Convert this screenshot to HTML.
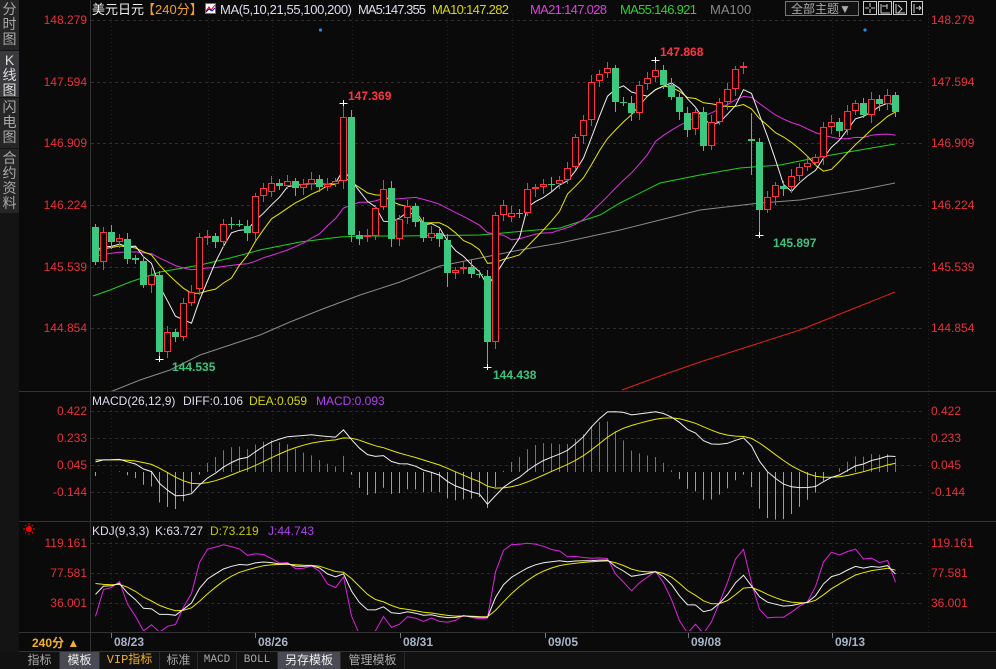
<!DOCTYPE html>
<html><head><meta charset="utf-8">
<style>
*{margin:0;padding:0;box-sizing:border-box}
body{width:996px;height:669px;background:#0a0a0a;overflow:hidden;position:relative;font-family:"Liberation Sans","Noto Sans CJK SC",sans-serif}
#side{position:absolute;left:0;top:0;width:19px;height:652px;background:#141414}
.st{position:absolute;left:0;width:19px;background:#262626;color:#a8a8a8;font-size:14px;line-height:15px;text-align:center;padding-top:2px}
#bar{position:absolute;left:0;top:652px;width:996px;height:17px;background:#111;font-size:12px}
.bt{position:absolute;top:0;height:17px;line-height:17px;text-align:center;color:#aaa;border-right:1px solid #2a2a2a}
svg{position:absolute;left:0;top:0}
</style></head><body>
<div id="side">
<div class="st" style="top:0;height:50px">分<br>时<br>图</div>
<div class="st" style="top:51px;height:46px;background:#3a3a3e;color:#ddd">K<br>线<br>图</div>
<div class="st" style="top:98px;height:50px">闪<br>电<br>图</div>
<div class="st" style="top:149px;height:64px">合<br>约<br>资<br>料</div>
</div>
<svg id="s" width="996" height="669" xmlns="http://www.w3.org/2000/svg" font-family="Liberation Sans, Noto Sans CJK SC, sans-serif">
<defs>
<clipPath id="cm"><rect x="91" y="12" width="834" height="379"/></clipPath>
<clipPath id="cd"><rect x="91" y="393" width="834" height="128"/></clipPath>
<clipPath id="ck"><rect x="91" y="523" width="834" height="108"/></clipPath>
</defs>
<g id="grid"></g>
<g stroke="#333" stroke-width="1">
<line x1="90.5" y1="0" x2="90.5" y2="652"/>
<line x1="19" y1="391.5" x2="996" y2="391.5"/>
<line x1="19" y1="521.5" x2="996" y2="521.5"/>
<line x1="19" y1="632.5" x2="996" y2="632.5"/>
<line x1="19" y1="651.5" x2="996" y2="651.5"/>
</g>
<g id="main" clip-path="url(#cm)"></g>
<g id="macd" clip-path="url(#cd)"></g>
<g id="kdj" clip-path="url(#ck)"></g>
<g id="labels" font-size="12"></g>
<g font-size="13">
<text x="92" y="14" fill="#eee">美元日元</text>
<text x="142" y="14" fill="#f0a030">【240分】</text>
<rect x="205.5" y="3.5" width="10" height="10" fill="#fff" stroke="#669"/>
<polyline points="206,11 209,7 211,10 215,5" fill="none" stroke="#d00" stroke-width="1"/>
<polyline points="206,12 209,9 212,11 215,8" fill="none" stroke="#00c" stroke-width="1"/>
<text x="220" y="14" fill="#dde" textLength="132">MA(5,10,21,55,100,200)</text>
<text x="358" y="14" fill="#dde" textLength="68">MA5:147.355</text>
<text x="432" y="14" fill="#d8d800" textLength="77">MA10:147.282</text>
<text x="530" y="14" fill="#e040e0" textLength="77">MA21:147.028</text>
<text x="620" y="14" fill="#30d030" textLength="77">MA55:146.921</text>
<text x="710" y="14" fill="#888">MA100</text>
</g>
<g font-size="12">
<rect x="785.5" y="1.5" width="73" height="14" fill="#111" stroke="#777"/>
<text x="791" y="13" fill="#aaa">全部主题▼</text>
<g fill="none" stroke="#ccc" stroke-width="1">
<rect x="863.5" y="1.5" width="13" height="13"/><rect x="878.5" y="1.5" width="13" height="13"/><rect x="893.5" y="1.5" width="13" height="13"/><rect x="911.5" y="1.5" width="11" height="13"/>
<path d="M870 3v4M870 9v4M865 8h4M871 8h4M881 4v9h9M882 6h5M887 4v5M896 4v9h9M898 5l4 4-4 4M914 4v9M916 8h5M919 6l2 2-2 2"/>
</g>
</g>
<g font-size="12">
<text x="92" y="405" fill="#dde">MACD(26,12,9)</text>
<text x="183" y="405" fill="#dde">DIFF:0.106</text>
<text x="249" y="405" fill="#d8d800">DEA:0.059</text>
<text x="316" y="405" fill="#b040f0">MACD:0.093</text>
<text x="92" y="535" fill="#dde">KDJ(9,3,3)</text>
<text x="155" y="535" fill="#dde">K:63.727</text>
<text x="210" y="535" fill="#c8c800">D:73.219</text>
<text x="268" y="535" fill="#b040f0">J:44.743</text>
</g>
<g>
<circle cx="29" cy="529" r="3" fill="#f00"/>
<path d="M29 523v2M29 533v2M23 529h2M33 529h2M25 525l1 1M32 532l1 1M25 533l1-1M32 526l1-1" stroke="#f00" stroke-width="1"/>
</g>
<g font-size="12" font-weight="bold">
<text x="348" y="100" fill="#ff3344">147.369</text>
<text x="660" y="56" fill="#ff3344">147.868</text>
<text x="172" y="371" fill="#3cc47e">144.535</text>
<text x="493" y="379" fill="#3cc47e">144.438</text>
<text x="773" y="247" fill="#3cc47e">145.897</text>
</g>
<circle cx="320.5" cy="30" r="1.6" fill="#2a8ae0"/>
<circle cx="865" cy="30" r="1.6" fill="#2a8ae0"/>
<text x="32" y="647" font-size="12" font-weight="bold" fill="#f0b030">240分 ▲</text>
<g font-size="12" font-weight="bold" fill="#a8b4c8" id="dates"></g>
</svg>
<div id="bar">
<div class="bt" style="left:20px;width:40px">指标</div>
<div class="bt" style="left:60px;width:40px;background:#4a4a55;color:#eee">模板</div>
<div class="bt" style="left:100px;width:60px;color:#f0b030;font-family:'Liberation Mono','Noto Sans CJK SC',monospace">VIP指标</div>
<div class="bt" style="left:160px;width:38px">标准</div>
<div class="bt" style="left:198px;width:39px;font-family:'Liberation Mono',monospace;font-size:11px">MACD</div>
<div class="bt" style="left:237px;width:41px;font-family:'Liberation Mono',monospace;font-size:11px">BOLL</div>
<div class="bt" style="left:278px;width:63px;background:#4a4a55;color:#eee">另存模板</div>
<div class="bt" style="left:341px;width:64px">管理模板</div>
</div>
<script>
var NS="http://www.w3.org/2000/svg";
function el(p,t,a,txt){var e=document.createElementNS(NS,t);for(var k in a)e.setAttribute(k,a[k]);if(txt!==undefined)e.textContent=txt;document.getElementById(p).appendChild(e);return e;}
var C=[[227,262],[262,232],[232,242],[242,238],[239,259],[258,260],[261,285],[285,275],[275,352],[352,332],
[332,337],[337,303],[303,292],[289,237],[238,236],[236,242],[242,224],[224,225],[224,224],[226,233],
[233,196],[196,188],[192,183],[183,186],[186,181],[181,188],[188,184],[184,179],[179,187],[187,184],
[184,181],[181,117],[117,235],[235,239],[237,235],[236,208],[207,189],[188,239],[239,219],[218,206],
[206,222],[222,238],[238,233],[233,239],[240,273],[273,270],[269,267],[267,274],[274,275],[276,342],
[342,215],[215,205],[217,213],[213,214],[213,189],[189,187],[187,184],[184,185],[184,180],[180,168],
[167,137],[136,120],[120,82],[81,74],[73,68],[68,102],[102,103],[103,113],[113,85],[84,78],
[77,70],[70,85],[85,97],[97,112],[113,130],[129,112],[112,146],[146,122],[122,102],[102,89],
[89,69],[68,66],[139,141],[142,210],[210,197],[197,185],[186,189],[187,176],[176,167],[167,163],
[163,157],[157,127],[127,122],[122,131],[130,111],[111,103],[103,115],[115,99],[99,104],[104,95],[95,112]];
var SP={8:[null,359],31:[103,null],32:[null,242],49:[null,367],70:[60,null],83:[null,235],82:[113,175],81:[62,null],36:[180,null],44:[null,287],13:[null,295],65:[null,112],62:[null,126]};
var N=C.length,H=[],L=[];
for(var i=0;i<N;i++){var o=C[i][0],c=C[i][1];var t=Math.min(o,c),b=Math.max(o,c);
var w1=3+((i*7)%5),w2=3+((i*11)%6);H[i]=t-w1;L[i]=b+w2;if(SP[i]){if(SP[i][0]!==null)H[i]=SP[i][0];if(SP[i][1]!==null)L[i]=SP[i][1];}}
function X(i){return 95.5+8*i;}
var gy=[20,82,143,205,267,328];
gy.forEach(function(y){el('grid','line',{x1:91,y1:y+.5,x2:925,y2:y+.5,stroke:'#2e2e2e','stroke-dasharray':'3,3'});});
[411,438,465,492,543,573,603].forEach(function(y){el('grid','line',{x1:91,y1:y+.5,x2:925,y2:y+.5,stroke:'#2a2a2a','stroke-dasharray':'3,3'});});
[111,208,272,352,447,512,592,687,752,832,928].forEach(function(x){el('grid','line',{x1:x+.5,y1:14,x2:x+.5,y2:632,stroke:'#262626','stroke-dasharray':'1,3'});});
var pl=[["148.279",20],["147.594",82],["146.909",143],["146.224",205],["145.539",267],["144.854",328],["0.422",411],["0.233",438],["0.045",465],["-0.144",492],["119.161",543],["77.581",573],["36.001",603]];
pl.forEach(function(p){el('labels','text',{x:87,y:p[1]+4,fill:'#e8303c','text-anchor':'end'},p[0]);el('labels','text',{x:931,y:p[1]+4,fill:'#e8303c'},p[0]);});
[["08/23",111],["08/26",255],["08/31",400],["09/05",545],["09/08",688],["09/13",832]].forEach(function(d){el('dates','text',{x:d[1]+3,y:646},d[0]);el('grid','line',{x1:d[1]+.5,y1:633,x2:d[1]+.5,y2:638,stroke:'#777'});});
var pre=[];for(var k=0;k<80;k++){pre.push(335-(k/79)*90+((k*13)%7)-3);}
var all=pre.concat(C.map(function(a){return a[1]}));
var P0=pre.length;
function ma(n){var r=[];for(var i=0;i<N;i++){var s=0;for(var j=0;j<n;j++)s+=all[P0+i-j];r.push(s/n);}return r;}
function pline(g,arr,col){var pts=arr.map(function(v,i){return X(i).toFixed(1)+","+v.toFixed(1)}).join(" ");el(g,'polyline',{points:pts,fill:'none',stroke:col,'stroke-width':1});}
function poly(g,pts,col){el(g,'polyline',{points:pts,fill:'none',stroke:col,'stroke-width':1});}
poly('main',"110,392 140,380 170,370 200,355 230,345 260,335 290,322 320,310 360,295 400,282 440,266 480,258 520,250 560,243 620,230 660,220 700,210 760,203 800,200 860,190 895,183",'#8a8a8a');
poly('main',"622,390 660,376 700,362 750,346 800,330 830,318 860,306 895,292",'#e02020');
poly('main',"93,296 110,290 130,282 160,272 200,265 230,258 260,250 300,242 340,237 360,236 400,236 480,235 560,228 600,215 620,203 660,183 700,175 740,168 780,165 820,157 860,150 895,144",'#20d020');
pline('main',ma(21),'#e030e0');
pline('main',ma(10),'#e8e800');
pline('main',ma(5),'#f0f0f0');
for(var i=0;i<N;i++){var o=C[i][0],c=C[i][1],x=X(i),t=Math.min(o,c),b=Math.max(o,c);
if(c<o){
 el('main','line',{x1:x,y1:H[i],x2:x,y2:t,stroke:'#ff3040'});el('main','line',{x1:x,y1:b,x2:x,y2:L[i],stroke:'#ff3040'});
 el('main','rect',{x:x-3,y:t+.5,width:6,height:Math.max(b-t-1,0.5),fill:'#0a0a0a',stroke:'#ff3040','stroke-width':1});
}else{
 el('main','line',{x1:x,y1:H[i],x2:x,y2:L[i],stroke:'#3cc87e'});
 el('main','rect',{x:x-3.5,y:t,width:7,height:Math.max(b-t,1),fill:'#3cc87e'});
}}
[[31,H[31]],[70,H[70]],[8,L[8]],[49,L[49]],[83,L[83]]].forEach(function(p){var x=X(p[0]);el('main','path',{d:'M'+(x-4)+' '+(p[1]+.5)+'h8M'+x+' '+(p[1]-3)+'v6',stroke:'#fff'});});
function pr(y){return 148.279-(y-20)/89.93;}
var ap=all.map(pr);var e12=ap[0],e26=ap[0],dea=0,DIF=[],DEA=[],M=[];
for(var k=0;k<ap.length;k++){e12=e12*11/13+ap[k]*2/13;e26=e26*25/27+ap[k]*2/27;var d=e12-e26;dea=dea*8/10+d*2/10;if(k>=P0){DIF.push(d);DEA.push(dea);M.push(2*(d-dea));}}
var Z=472,S=142.9;
for(var i=0;i<N;i++){var v=M[i];el('macd','line',{x1:X(i),y1:Z,x2:X(i),y2:Z-v*S,stroke:v>=0?'#e84050':'#50c890'});}
pline('macd',DEA.map(function(v){return Z-v*S}),'#e8e800');
pline('macd',DIF.map(function(v){return Z-v*S}),'#f0f0f0');
var allH=[],allL=[];for(var k=0;k<P0;k++){allH.push(all[k]-5);allL.push(all[k]+5);}
allH=allH.concat(H);allL=allL.concat(L);
var K=50,D=50,KA=[],DA=[],JA=[];
for(var k=8;k<all.length;k++){var hh=1e9,ll=-1e9;for(var j=0;j<9;j++){hh=Math.min(hh,allH[k-j]);ll=Math.max(ll,allL[k-j]);}
var rsv=ll==hh?50:(ll-all[k])/(ll-hh)*100;K=K*2/3+rsv/3;D=D*2/3+K/3;if(k>=P0){KA.push(K);DA.push(D);JA.push(3*K-2*D);}}
function ky(v){return 603-(v-36.001)*0.7215;}
pline('kdj',JA.map(ky),'#e020e0');
pline('kdj',DA.map(ky),'#e8e800');
pline('kdj',KA.map(ky),'#f0f0f0');
</script>
</body></html>
